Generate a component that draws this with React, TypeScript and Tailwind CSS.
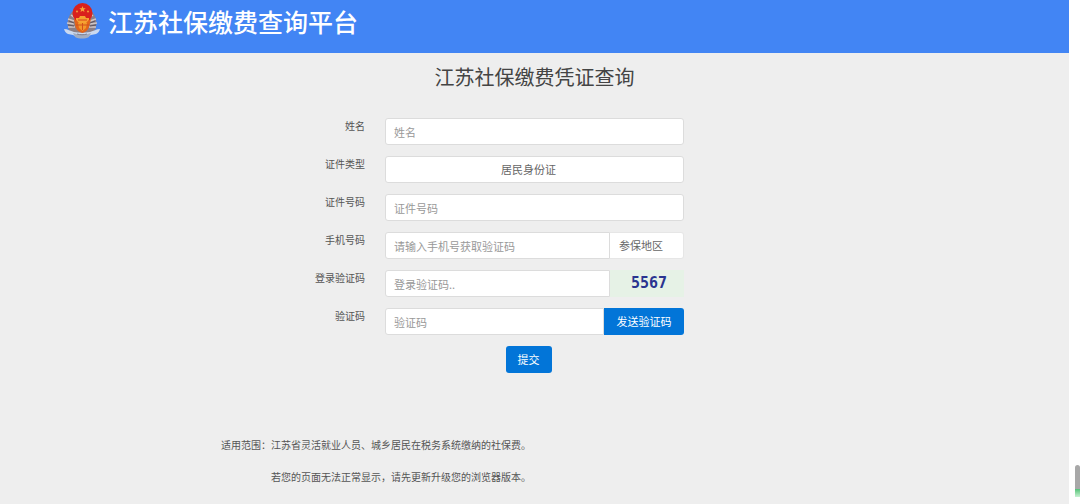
import type { ReactNode } from "react"

type RowProps = {
  id: string
  label: string
  children: ReactNode
}

const control = "h-[27px] min-w-0 flex-1 border border-[#dcdcdc] bg-white px-2 text-[11px] text-[#666] placeholder:text-[#999] outline-none"

const Emblem = () => {
  return (
    <svg className="h-9 w-9" viewBox="0 0 36 36" aria-hidden="true">
      <path d="M10 7C4 12 2 20 5 27l6 5h14l6-5c3-7 1-15-5-20z" fill="#8b7f86" />
      <path d="M7 12l4 3M4 16l6 2M3 20l7 1M4 24l7 0M29 12l-4 3M32 16l-6 2M33 20l-7 1M32 24l-7 0" stroke="#cfc6c6" strokeWidth="1.400" />
      <path d="M5 18l5 2M4 22l6 1M31 18l-5 2M32 22l-6 1" stroke="#5f5660" strokeWidth="1" />
      <path d="M0 26c4 0 6 2 10 3 5 1 11 1 16 0 4-1 6-3 10-3-1 3-2 4-4 5l-5 1c-5 3-13 3-18 0l-5-1c-2-1-3-2-4-5z" fill="#cbd9ef" />
      <path d="M9 30c6 2 12 2 18 0l-2 4c-4 2-10 2-14 0z" fill="#a3adc0" />
      <path d="M13 31c3 1 7 1 10 0" fill="none" stroke="#7c7f92" strokeWidth="1" />
      <path d="M10 16h17l-2 8c-1 3-3 5-6.500 6-4-1-6-3-7-6z" fill="#e2641b" />
      <path d="M14 20h9l-1 5-3.500 3-3.500-3z" fill="#f3982a" />
      <path d="M12 22h13M18.500 20v7" stroke="#d2501b" strokeWidth="1" />
      <circle cx="18.500" cy="10" r="10" fill="#d9201d" />
      <path d="M18.500 3l.9 2.200 2.300.1-1.800 1.500.6 2.300-2-1.300-2 1.300.6-2.300-1.800-1.500 2.300-.1z" fill="#f6a43b" />
      <circle cx="13" cy="8.500" r="1.100" fill="#f09438" />
      <circle cx="24" cy="8.500" r="1.100" fill="#f09438" />
      <path d="M12 17v-2h3l1-2h5l1 2h3v2l-3 3h-7z" fill="#f5a331" />
      <path d="M14 17h9" stroke="#d9451d" strokeWidth="1" />
    </svg>
  )
}

const Row = ({ id, label, children }: RowProps) => {
  return (
    <div className="grid grid-cols-[1fr_299px_1fr]">
      <label htmlFor={id} className="pr-5 text-right text-[10px] leading-4 text-[#555]">{label}</label>
      <div className="flex">{children}</div>
    </div>
  )
}

const App = () => {
  return (
    <div className="flex min-h-screen bg-white font-['Noto_Sans_CJK_SC',sans-serif]">
      <div className="min-w-0 flex-1 bg-[#eee]">
        <header className="flex h-[53px] items-start gap-2 bg-[#4285f4] pt-[3px] pl-16">
          <Emblem />
          <div className="text-[25px] leading-9 font-medium text-white">江苏社保缴费查询平台</div>
        </header>

        <main>
          <h1 className="pt-2 text-center text-[20px] leading-8 text-[#444]">江苏社保缴费凭证查询</h1>

          <form className="mt-[25px] flex flex-col gap-[11px]" onSubmit={(e) => e.preventDefault()}>
            <Row id="name" label="姓名">
              <input id="name" placeholder="姓名" className={`${control} rounded-[3px]`} />
            </Row>
            <Row id="cardType" label="证件类型">
              <select id="cardType" className={`${control} appearance-none rounded-[3px] pr-5 [text-align-last:center]`}>
                <option>居民身份证</option>
              </select>
            </Row>
            <Row id="cardNo" label="证件号码">
              <input id="cardNo" placeholder="证件号码" className={`${control} rounded-[3px]`} />
            </Row>
            <Row id="phone" label="手机号码">
              <input id="phone" placeholder="请输入手机号获取验证码" className={`${control} rounded-l-[3px]`} />
              <select aria-label="参保地区" className="h-[27px] w-[74px] appearance-none rounded-r-[3px] border border-l-0 border-[#e6e6e6] bg-white px-[9px] text-[11px] text-[#666]">
                <option>参保地区</option>
              </select>
            </Row>
            <Row id="loginCode" label="登录验证码">
              <input id="loginCode" placeholder="登录验证码.." className={`${control} rounded-l-[3px]`} />
              <div className="flex h-[27px] w-[74px] items-center justify-center bg-[#e6f2e6] pl-1 font-['DejaVu_Sans_Mono',monospace] text-[15px] font-bold text-[#2a3590]">5567</div>
            </Row>
            <Row id="smsCode" label="验证码">
              <input id="smsCode" placeholder="验证码" className={`${control} rounded-l-[3px]`} />
              <button type="button" className="h-[27px] w-20 rounded-r-[3px] bg-[#0275d8] text-[11px] text-white">发送验证码</button>
            </Row>
            <div className="flex justify-center pr-3">
              <button type="submit" className="h-[27px] w-[46px] rounded-[3px] bg-[#0275d8] text-[11px] text-white">提交</button>
            </div>
          </form>

          <div className="mt-16 flex flex-col gap-4 pb-5 pl-[221px] text-[10px] leading-4 text-[#555]">
            <p>适用范围：江苏省灵活就业人员、城乡居民在税务系统缴纳的社保费。</p>
            <p className="pl-[50px]">若您的页面无法正常显示，请先更新升级您的浏览器版本。</p>
          </div>
        </main>
      </div>

      <div className="flex w-[11px] flex-col items-end justify-end pb-2">
        <div className="h-6 w-[5px] rounded-t-sm bg-[#a8a8a8]"></div>
        <div className="h-2 w-[5px] bg-linear-to-b from-[#4fc277] to-[#c8f2d4]"></div>
      </div>
    </div>
  )
}

export default App
